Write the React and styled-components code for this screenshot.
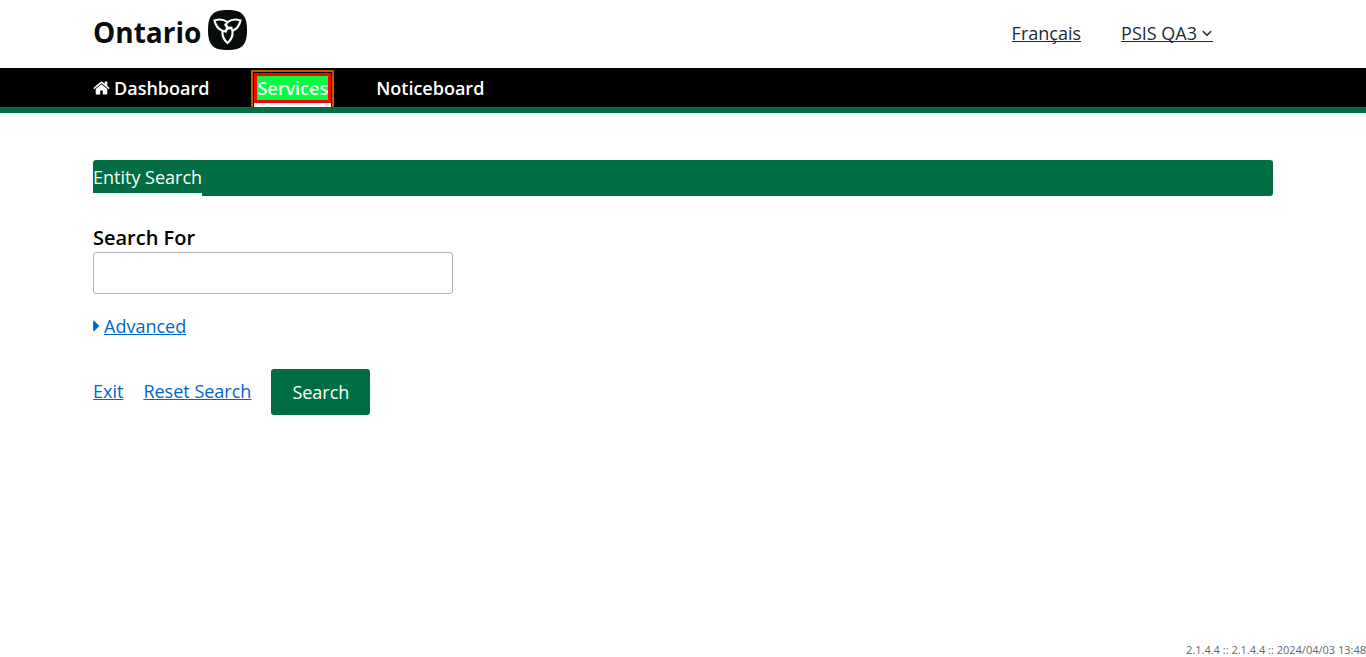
import React, { useState } from "react";
import styled, { createGlobalStyle } from "styled-components";
import { FaCaretRight } from "react-icons/fa";
import { FaAngleDown } from "react-icons/fa6";

const GlobalStyle = createGlobalStyle`
  *, *::before, *::after { box-sizing: border-box; }
  body {
    margin: 0;
    background: #fff;
    color: #000;
    font-family: "Open Sans", "Noto Sans", sans-serif;
    font-size: 18px;
    line-height: 24px;
  }
`;

const Page = styled.div`
  display: flex;
  flex-direction: column;
  min-height: 100vh;
`;

const Container = styled.div`
  width: 100%;
  max-width: 1180px;
  margin: 0 auto;
`;

const HeaderRow = styled(Container)`
  display: flex;
  align-items: center;
  justify-content: space-between;
  height: 68px;
  padding: 0 60px 2px 0;
`;

const Brand = styled.a`
  display: flex;
  align-items: center;
  gap: 7px;
  padding-bottom: 6px;
  color: #080c0c;
  font-size: 28px;
  font-weight: 700;
  line-height: 40px;
  text-decoration: none;
`;

const BrandName = styled.span`
  padding-top: 4px;
`;

const BrandMark = styled.svg`
  display: block;
  width: 39px;
  height: 40px;
`;

const HeaderLinks = styled.div`
  display: flex;
  gap: 40px;
`;

const HeaderLink = styled.a`
  display: flex;
  align-items: center;
  gap: 4px;
  border-bottom: 1px solid #1a2b34;
  color: #1a2b34;
  line-height: 16px;
  text-decoration: none;

  svg { width: 12px; height: 12px; }
`;

const NavBar = styled.nav`
  overflow: hidden;
  border-bottom: 6px solid #006e42;
  background: #000;
`;

const NavList = styled(Container)`
  display: flex;
  align-items: flex-start;
  gap: 42px;
  padding-top: 5px;
`;

const NavLink = styled.a`
  border-bottom: 4px solid ${(p) => (p.$active ? "#fff" : "transparent")};
  outline: ${(p) => (p.$active ? "2px solid #c25700" : "none")};
  outline-offset: 1px;
  color: #fff;
  font-weight: 600;
  text-decoration: none;
`;

const NavLabel = styled.span`
  display: flex;
  align-items: center;
  gap: 4px;
  border: 3px solid ${(p) => (p.$active ? "#f00" : "transparent")};
  border-left-width: ${(p) => (p.$first ? "0" : "3px")};
  background: ${(p) => (p.$active ? "#00ff40" : "transparent")};
`;

const HomeGlyph = styled.svg`
  width: 17px;
  height: 18px;
  fill: currentColor;
`;

const Main = styled(Container)`
  flex: 1;
  padding-top: 47px;
`;

const TitleBar = styled.div`
  display: flex;
  height: 36px;
  border-radius: 3px;
  background: #006e42;
  color: #fff;
`;

const Title = styled.h1`
  margin: 0;
  border-bottom: 3px solid #fff;
  font-size: 18px;
  font-weight: 400;
  line-height: 34px;
`;

const Form = styled.form`
  display: flex;
  flex-direction: column;
  align-items: flex-start;
  padding-top: 30px;
`;

const FieldLabel = styled.label`
  padding-bottom: 2px;
  font-size: 20px;
  font-weight: 600;
`;

const TextInput = styled.input`
  width: 360px;
  max-width: 100%;
  height: 42px;
  padding: 0 12px;
  border: 1px solid #b5b5b5;
  border-radius: 3px;
  font: inherit;
`;

const TextLink = styled.a`
  color: #06c;
  text-decoration: underline;
  text-decoration-thickness: 1px;
  text-underline-offset: 1px;
`;

const AdvancedRow = styled.div`
  display: flex;
  align-items: center;
  gap: 4px;
  padding: 20px 0 31px;
  color: #06c;

  svg { width: 7px; height: 18px; }
`;

const Actions = styled.div`
  display: flex;
  align-items: center;
  gap: 20px;

  ${TextLink} { padding-bottom: 2px; }
`;

const SearchButton = styled.button`
  height: 46px;
  padding: 0 21px;
  border: 0;
  border-radius: 3px;
  background: #006e42;
  color: #fff;
  font: inherit;
`;

const Footer = styled.footer`
  color: #666;
  font-size: 11px;
  line-height: 15px;
  text-align: right;
`;

function HomeIcon() {
  return (
    <HomeGlyph viewBox="0 0 1664 1792" aria-hidden="true">
      <path d="M1408 992v480q0 26-19 45t-45 19h-384v-384h-256v384h-384q-26 0-45-19t-19-45v-480q0-1 .5-3t.5-3l575-474 575 474q1 2 1 6zm223-69l-62 74q-8 9-21 11h-3q-13 0-21-7l-692-577-692 577q-12 8-24 7-13-2-21-11l-62-74q-8-10-7-23.500t11-21.500l719-599q32-26 76-26t76 26l244 204v-195q0-14 9-23t23-9h192q14 0 23 9t9 23v408l219 182q10 8 11 21.500t-7 23.500z" />
    </HomeGlyph>
  );
}

const PETAL = "M-5 3C-5.500 7.500 -3.500 12 0 15C3.500 12 5.500 7.500 5 3C4.500 0.500 2.500 -1 0 0C-1.500 1 -2 3 -1.500 4.500";

function Trillium() {
  return (
    <BrandMark viewBox="0 0 39 40" aria-hidden="true">
      <path fill="#080c0c" d="M19.500 0C34 0 39 5 39 20S34 40 19.500 40 0 35 0 20 5 0 19.500 0Z" />
      <g
        fill="none"
        stroke="#fff"
        strokeWidth="2.1"
        strokeLinejoin="miter"
        transform="translate(19.500 18)"
      >
        <path d={PETAL} />
        <path d={PETAL} transform="rotate(120)" />
        <path d={PETAL} transform="rotate(240)" />
      </g>
    </BrandMark>
  );
}

export default function App() {
  const [query, setQuery] = useState("");

  return (
    <Page>
      <GlobalStyle />
      <header>
        <HeaderRow>
          <Brand href="#home">
            <BrandName>Ontario</BrandName>
            <Trillium />
          </Brand>
          <HeaderLinks>
            <HeaderLink href="#fr" lang="fr">Français</HeaderLink>
            <HeaderLink href="#account">
              PSIS QA3
              <FaAngleDown aria-hidden="true" />
            </HeaderLink>
          </HeaderLinks>
        </HeaderRow>
        <NavBar>
          <NavList>
            <NavLink href="#dashboard">
              <NavLabel $first>
                <HomeIcon />
                Dashboard
              </NavLabel>
            </NavLink>
            <NavLink href="#services" $active aria-current="page">
              <NavLabel $active>Services</NavLabel>
            </NavLink>
            <NavLink href="#noticeboard">
              <NavLabel>Noticeboard</NavLabel>
            </NavLink>
          </NavList>
        </NavBar>
      </header>
      <Main as="main">
        <TitleBar>
          <Title>Entity Search</Title>
        </TitleBar>
        <Form onSubmit={(e) => e.preventDefault()}>
          <FieldLabel htmlFor="search-for">Search For</FieldLabel>
          <TextInput
            id="search-for"
            type="text"
            value={query}
            onChange={(e) => setQuery(e.target.value)}
          />
          <AdvancedRow>
            <FaCaretRight aria-hidden="true" />
            <TextLink href="#advanced">Advanced</TextLink>
          </AdvancedRow>
          <Actions>
            <TextLink href="#exit">Exit</TextLink>
            <TextLink href="#reset" onClick={() => setQuery("")}>Reset Search</TextLink>
            <SearchButton type="submit">Search</SearchButton>
          </Actions>
        </Form>
      </Main>
      <Footer>2.1.4.4 :: 2.1.4.4 :: 2024/04/03 13:48</Footer>
    </Page>
  );
}
